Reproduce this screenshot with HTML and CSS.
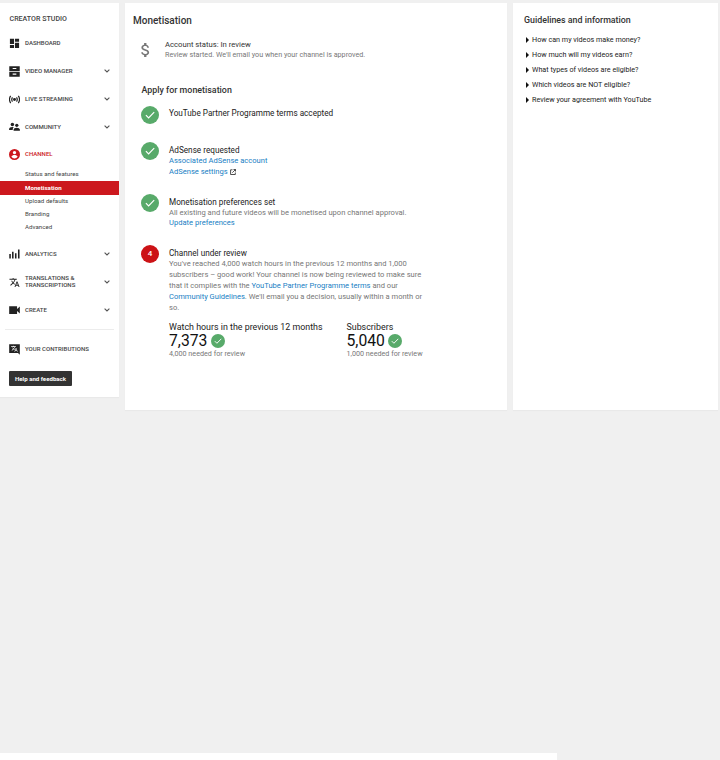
FILE: index.html
```html
<!DOCTYPE html>
<html lang="en-GB">
<head>
<meta charset="utf-8">
<title>Monetisation</title>
<link rel="stylesheet" href="styles.css">
</head>
<body>
<svg class="defs" width="0" height="0">
  <symbol id="check" viewBox="0 0 18 18"><circle cx="9" cy="9" r="9" fill="#58aa6a"/><path d="M4.9 9.2l2.7 2.7 5.6-5.7" fill="none" stroke="#fff" stroke-width="1.2"/></symbol>
  <symbol id="chev" viewBox="0 0 6 4"><path d="M.6.6L3 3 5.400.6" fill="none" stroke="#555" stroke-width="1.100"/></symbol>
  <symbol id="translate" viewBox="0 0 24 24"><path d="M12.870 15.070l-2.540-2.510.03-.03A17.520 17.520 0 0 0 14.070 6H17V4h-7V2H8v2H1v2h11.170C11.500 7.920 10.440 9.750 9 11.350 8.070 10.320 7.300 9.190 6.690 8h-2c.73 1.630 1.730 3.170 2.980 4.560l-5.090 5.020L4 19l5-5 3.110 3.110.76-2.040zM18.500 10h-2L12 22h2l1.120-3h4.750L21 22h2l-4.500-12zm-2.620 7l1.620-4.330L19.120 17h-3.240z"/></symbol>
</svg>
<div class="page">
  <nav class="sidebar">
    <h2 class="studio">CREATOR STUDIO</h2>
    <a class="item"><svg class="ico" viewBox="0 0 12 12"><path d="M1 .8h4.500v5.700H1zM6.500.8H11v3.400H6.500zM1 7.500h4.500v3.300H1zM6.500 5.200H11v5.600H6.500z"/></svg><span>DASHBOARD</span></a>
    <a class="item"><svg class="ico" viewBox="0 0 12 12"><path fill-rule="evenodd" d="M.3.300h11.400v5.200H.3zM.3 6.400h11.400v5.300H.3zM4 2.200v1.200h4V2.200zM4 8.300v1.200h4V8.300z"/></svg><span>VIDEO MANAGER</span><svg class="chev"><use href="#chev"/></svg></a>
    <a class="item"><svg class="ico" viewBox="0 0 12 12"><circle cx="6" cy="6" r="1.600"/><path d="M3.800 3.600q-1.600 2.400 0 4.800M8.200 3.600q1.600 2.400 0 4.800M1.800 2.100q-2.600 3.900 0 7.800M10.200 2.100q2.600 3.900 0 7.800" fill="none" stroke="#222" stroke-width="1.300"/></svg><span>LIVE STREAMING</span><svg class="chev"><use href="#chev"/></svg></a>
    <a class="item"><svg class="ico" viewBox="0 0 12 12"><circle cx="3.700" cy="2.800" r="1.900"/><circle cx="8.500" cy="3.600" r="1.800"/><path d="M.1 8.700V7.400q.2-1.700 3.500-1.900 1 0 1.600.2-1.200.8-1.200 3zM5 9.600V8.200q.2-1.700 3.400-1.800 3.200.1 3.500 1.800v1.400z"/></svg><span>COMMUNITY</span><svg class="chev"><use href="#chev"/></svg></a>
    <a class="item active"><svg class="ico" viewBox="0 0 24 24"><path d="M12 0a12 12 0 1 0 0 24 12 12 0 0 0 0-24zm0 4.200a3.700 3.700 0 1 1 0 7.400 3.700 3.700 0 0 1 0-7.400zM12 20.500a8 8 0 0 1-6.700-3.500c0-2.400 4.500-3.800 6.700-3.800s6.700 1.400 6.700 3.800A8 8 0 0 1 12 20.500z"/></svg><span>CHANNEL</span></a>
    <ul class="sub">
      <li>Status and features</li>
      <li class="current">Monetisation</li>
      <li>Upload defaults</li>
      <li>Branding</li>
      <li>Advanced</li>
    </ul>
    <a class="item"><svg class="ico" viewBox="0 0 12 12"><path d="M.3 5.500h1.700v4.800H.3zM3.300 3H5v7.300H3.300zM6.500 4.500h1.700v5.800H6.500zM9.800.5h1.700v9.800H9.800z"/></svg><span>ANALYTICS</span><svg class="chev"><use href="#chev"/></svg></a>
    <a class="item"><svg class="ico"><use href="#translate"/></svg><span>TRANSLATIONS &amp;<br>TRANSCRIPTIONS</span><svg class="chev"><use href="#chev"/></svg></a>
    <a class="item"><svg class="ico" viewBox="0 0 12 12"><path d="M.2 1.400h8.600v3L11.800 1.600v7.800l-3-2.800v3.200H.2z"/></svg><span>CREATE</span><svg class="chev"><use href="#chev"/></svg></a>
    <hr class="rule">
    <a class="item contrib"><svg class="ico" viewBox="0 0 12 12"><path d="M.2.200h11.600v11.600l-2-1.900H.2z"/><svg x="2" y="1.200" width="7.800" height="7.800" class="inv"><use href="#translate"/></svg></svg><span>YOUR CONTRIBUTIONS</span></a>
    <button class="help">Help and feedback</button>
  </nav>

  <main class="main">
    <h1 class="title">Monetisation</h1>
    <section class="status">
      <svg class="dollar" viewBox="6 3 11.600 18"><path d="M11.800 10.900c-2.270-.59-3-1.200-3-2.150 0-1.090 1.010-1.850 2.700-1.850 1.780 0 2.440.85 2.500 2.100h2.210c-.07-1.720-1.120-3.300-3.210-3.810V3h-3v2.160c-1.940.42-3.500 1.680-3.500 3.610 0 2.310 1.910 3.460 4.700 4.130 2.500.6 3 1.480 3 2.410 0 .69-.49 1.790-2.700 1.790-2.060 0-2.870-.92-2.980-2.100h-2.200c.12 2.190 1.760 3.420 3.680 3.830V21h3v-2.150c1.950-.37 3.500-1.500 3.500-3.550 0-2.840-2.430-3.810-4.700-4.400z"/></svg>
      <div>
        <p class="acct">Account status: In review</p>
        <p class="desc started">Review started. We'll email you when your channel is approved.</p>
      </div>
    </section>
    <h2 class="apply">Apply for monetisation</h2>
    <ol class="steps">
      <li class="step one"><svg class="badge"><use href="#check"/></svg><div><h3>YouTube Partner Programme terms accepted</h3></div></li>
      <li class="step two"><svg class="badge"><use href="#check"/></svg><div><h3>AdSense requested</h3><p class="desc"><a>Associated AdSense account</a></p><p class="desc"><a>AdSense settings</a> <svg class="ext" viewBox="0 0 6 6"><path d="M2.500.8H.6v4.700h4.700V3.500M3.500.5h2v2M5.400.6L2.300 3.700" fill="none" stroke="#222" stroke-width=".8"/></svg></p></div></li>
      <li class="step three"><svg class="badge"><use href="#check"/></svg><div><h3>Monetisation preferences set</h3><p class="desc all">All existing and future videos will be monetised upon channel approval.</p><p class="desc"><a>Update preferences</a></p></div></li>
      <li class="step four"><span class="badge num">4</span><div><h3>Channel under review</h3>
        <p class="desc review">You've reached 4,000 watch hours in the previous 12 months and 1,000<br>subscribers – good work! Your channel is now being reviewed to make sure<br>that it complies with the <a>YouTube Partner Programme terms</a> and our<br><a>Community Guidelines</a>. We'll email you a decision, usually within a month or<br>so.</p>
        <div class="stats">
          <div><h3>Watch hours in the previous 12 months</h3><p class="count">7,373 <svg><use href="#check"/></svg></p><p class="desc need">4,000 needed for review</p></div>
          <div><h3>Subscribers</h3><p class="count">5,040 <svg><use href="#check"/></svg></p><p class="desc need">1,000 needed for review</p></div>
        </div></div></li>
    </ol>
  </main>

  <aside class="aside">
    <h2>Guidelines and information</h2>
    <ul>
      <li>How can my videos make money?</li>
      <li>How much will my videos earn?</li>
      <li>What types of videos are eligible?</li>
      <li>Which videos are NOT eligible?</li>
      <li>Review your agreement with YouTube</li>
    </ul>
  </aside>
</div>
<footer class="footer"></footer>
</body>
</html>
```
FILE: styles.css
```css
* { box-sizing: border-box; margin: 0; padding: 0; }
body { height: 760px; display: flex; flex-direction: column; justify-content: space-between; background: #f0f0f0; font-family: Roboto, sans-serif; color: #333; overflow: hidden; }
.defs { position: absolute; }
ul, ol { list-style: none; }
svg { display: block; flex: none; }
.page { display: grid; grid-template-columns: 119px 382px 205px; column-gap: 6px; padding-top: 3px; align-items: start; }
.sidebar, .main, .aside { background: #fff; box-shadow: 0 1px 1px #e9e9e9; }
.main, .aside { height: 407px; }
.sidebar { height: 394px; }
.studio { height: 26px; padding: 9px 0 0 9.500px; font-size: 7.100px; line-height: 14px; font-weight: 500; color: #444; }
.item { display: flex; align-items: center; height: 28px; padding: 0 9px; font-size: 6.050px; line-height: 7px; font-weight: 500; color: #444; }
.item span { padding-bottom: 2px; }
.ico { width: 11px; height: 11px; margin-right: 5px; fill: #222; }
.item .chev { width: 6px; height: 4px; margin-left: auto; }
.active { height: 27px; color: #cc181e; }
.active .ico { fill: #cc181e; }
.sub { padding-bottom: 6px; }
.sub li { height: 13px; padding-left: 25px; font-size: 6.150px; letter-spacing: .02px; line-height: 13px; color: #444; }
.sub .current { height: 14px; line-height: 14px; background: #cc181e; color: #fff; font-weight: 700; }
.rule { height: 1px; margin: 5px 5px; border: 0; background: #ececec; }
.inv { fill: #fff; }
.help { display: block; width: 63px; height: 15px; margin: 8px 0 0 9px; border: 0; border-radius: 1px; background: #333; color: #fff; font: 700 6.100px/15px Roboto, sans-serif; }
.main { padding: 10px 0 0 8px; }
.title { font-size: 10px; line-height: 15px; font-weight: 500; }
.status { display: flex; gap: 15px; padding: 11px 0 0 8px; height: 52px; }
.dollar { width: 9px; height: 14px; margin-top: 3.500px; fill: #777; }
.acct { font-size: 7.700px; line-height: 11px; }
.desc { font-size: 7.570px; line-height: 11px; color: #777; white-space: nowrap; }
.started { margin-top: -1px; font-size: 7.200px; }
.desc a { color: #2080c4; }
.apply { margin-left: 8.500px; font-size: 8.900px; line-height: 20px; font-weight: 500; }
.steps { padding-left: 8px; }
.step { display: flex; gap: 10px; align-items: flex-start; }
.step > div { padding-top: 3px; }
.badge { width: 18px; height: 18px; }
.step h3 { font-size: 8.180px; line-height: 11px; font-weight: 400; color: #222; white-space: nowrap; }
.step h3 + .desc { margin-top: -1px; }
.one { height: 37px; padding-top: 8px; margin-top: -2px; }
.step.one > div { padding-top: 2px; }
.ext { display: inline-block; width: 6px; height: 6px; vertical-align: -1px; }
.num { flex: none; border-radius: 50%; background: #cc1216; color: #fff; font-size: 8px; font-weight: 500; line-height: 18px; text-align: center; }
.two { height: 52px; padding-top: 7px; }
.three { height: 51px; padding-top: 7px; }
.step h3 + .all { margin: 0 0 -1px; line-height: 10px; }
.four { padding-top: 7px; }
.stats { display: flex; margin-top: 9px; }
.stats > div:first-child { width: 177.500px; }
.stats h3 { font-size: 8.870px; }
.count { display: flex; align-items: center; gap: 3.500px; height: 16px; font-size: 15.700px; line-height: 16px; color: #111; }
.count svg { width: 14px; height: 14px; margin-top: -1px; }
.need { margin-top: -1px; font-size: 7.200px; }
.aside { padding: 10px 0 0 11px; }
.aside h2 { font-size: 8.850px; line-height: 14px; font-weight: 500; }
.aside ul { padding-top: 5px; }
.aside li { display: flex; align-items: center; height: 15px; font-size: 7.200px; color: #222; }
.aside li::before { content: ""; margin: 0 3px 0 2px; border-left: 3px solid #111; border-top: 3px solid transparent; border-bottom: 3px solid transparent; }
.footer { width: 557px; height: 7px; background: #fff; }
```
